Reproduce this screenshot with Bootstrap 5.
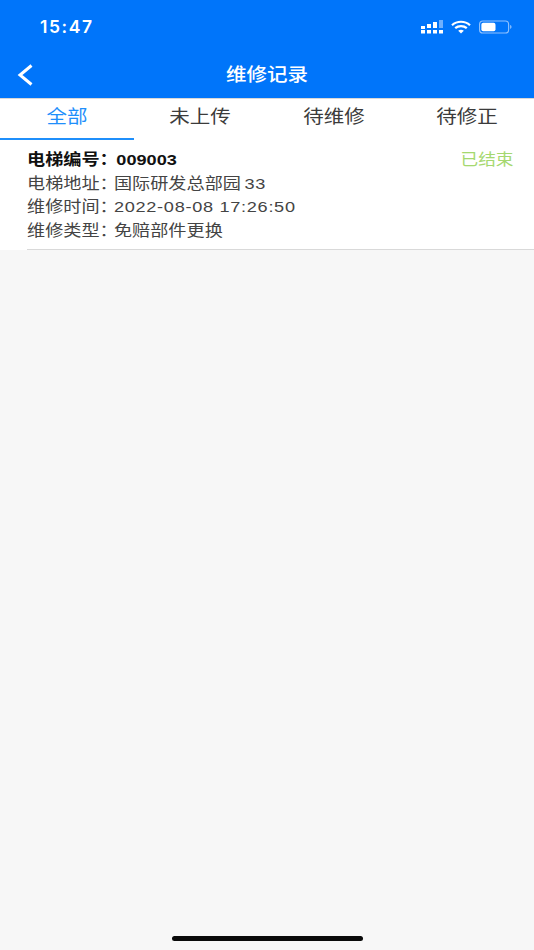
<!DOCTYPE html>
<html lang="zh"><head><meta charset="utf-8">
<link href="https://cdn.jsdelivr.net/npm/bootstrap@5.3.0/dist/css/bootstrap.min.css" rel="stylesheet">
<style>
html,body{height:100%}
body{background:#f7f7f7;font-family:"Liberation Sans","Noto Sans CJK SC",sans-serif;width:534px;height:950px;overflow:hidden}
.app-page{height:950px}
.head-bar{background:#0075fa;height:99px;border-bottom:1px solid #d8d8d8;color:#fff}
.status-row{height:52px;padding:8px 22px 0 40px}
.clock{font-family:Inter,"Liberation Sans",sans-serif;font-size:17.500px;font-weight:600;letter-spacing:1.600px;line-height:38px}
.title-row{height:46px;padding-left:17px}
.title-box{left:0;right:0;top:0;bottom:0}
.page-title{display:inline-block;font-size:18px;font-weight:500;line-height:46px;transform:scaleX(1.14)}
.tab-bar{background:#fff;height:41px}
.tab-item{width:133.500px;height:41px;color:#3b3b3b;padding:0}
.tab-text{display:inline-block;font-size:18px;line-height:37px;transform:scaleX(1.14)}
.tab-on{color:#1f8ffb;border-bottom:2.500px solid #1f8ffb}
.rec-wrap{background:#fff;height:110px;padding-left:27px}
.rec-body{border-bottom:1px solid #d9d9d9;height:110px;padding:8px 20px 0 0}
.rec-line{width:fit-content;font-size:15.500px;line-height:23.500px;color:#444;white-space:nowrap;transform:scaleX(1.17);transform-origin:left center}
.rec-strong{color:#111;font-weight:700}
.rec-mark{letter-spacing:-3.200px}
.rec-num{letter-spacing:.6px}
.rec-strong .rec-num{letter-spacing:0}
.rec-gap{margin-left:3px}
.rec-strong .rec-gap{margin-left:2px}
.rec-done{color:#a5d86f;font-size:15.500px;line-height:23.500px;transform:scaleX(1.14);transform-origin:right center}
.home-bar{width:191px;height:5px;background:#0a0a0a;border-radius:3px;left:172px;bottom:9px}
</style></head>
<body>
<div class="app-page position-relative d-flex flex-column">
  <header class="head-bar d-flex flex-column">
    <div class="status-row d-flex justify-content-between align-items-start">
      <span class="clock">15:47</span>
      <div class="d-flex align-items-center gap-1 mt-2 pt-1">
        <svg width="22" height="14" viewBox="0 0 22 14" fill="#fff"><rect x="0" y="6" width="4" height="3"/><rect x="0" y="10" width="4" height="3.500"/><rect x="6" y="4" width="4" height="4"/><rect x="6" y="10" width="4" height="3.500"/><rect x="12" y="2" width="4" height="6"/><rect x="12" y="10" width="4" height="3.500"/><rect x="18" y="0" width="4" height="8" fill="#6fb0fd"/><rect x="18" y="10" width="4" height="3.500"/></svg>
        <svg width="20" height="14" viewBox="0 0 20 14" fill="none" stroke="#fff" stroke-width="2.200" class="ms-1"><path d="M1 5.200C6 .6 14 .6 19 5.200"/><path d="M4.200 8.200c3.300-2.900 8.300-2.900 11.600 0"/><path d="M10 13.500l-2.800-2.800c1.600-1.300 4-1.300 5.600 0z" fill="#fff" stroke="none"/></svg>
        <svg width="33" height="14" viewBox="0 0 35 14" class="ms-1"><rect x=".6" y=".6" width="30.800" height="12.800" rx="3.500" fill="none" stroke="#8fc1fd" stroke-width="1.200"/><rect x="2.500" y="2.500" width="15" height="9" rx="2" fill="#fff"/><path d="M33 5v4c1-.4 1.500-1.200 1.500-2s-.5-1.600-1.500-2z" fill="#8fc1fd"/></svg>
      </div>
    </div>
    <div class="title-row position-relative d-flex align-items-center">
      <div class="title-box position-absolute text-center"><span class="page-title">维修记录</span></div>
      <svg class="position-relative" width="17" height="22" viewBox="0 0 17 22" fill="none" stroke="#fff" stroke-width="3"><path d="M14.500 1.500L3 11l11.500 9.500"/></svg>
    </div>
  </header>
  <nav class="tab-bar d-flex">
    <div class="tab-item tab-on text-center"><span class="tab-text">全部</span></div>
    <div class="tab-item text-center"><span class="tab-text">未上传</span></div>
    <div class="tab-item text-center"><span class="tab-text">待维修</span></div>
    <div class="tab-item text-center"><span class="tab-text">待修正</span></div>
  </nav>
  <section class="rec-wrap">
    <div class="rec-body">
      <div class="d-flex justify-content-between">
        <div class="rec-line rec-strong">电梯编号<span class="rec-mark">：</span><span class="rec-num rec-gap">009003</span></div>
        <div class="rec-done">已结束</div>
      </div>
      <div class="rec-line">电梯地址<span class="rec-mark">：</span>国际研发总部园<span class="rec-num rec-gap">33</span></div>
      <div class="rec-line">维修时间<span class="rec-mark">：</span><span class="rec-num">2022-08-08 17:26:50</span></div>
      <div class="rec-line">维修类型<span class="rec-mark">：</span>免赔部件更换</div>
    </div>
  </section>
  <div class="home-bar position-absolute"></div>
</div>
<script src="https://cdn.jsdelivr.net/npm/bootstrap@5.3.0/dist/js/bootstrap.bundle.min.js"></script>
</body></html>
